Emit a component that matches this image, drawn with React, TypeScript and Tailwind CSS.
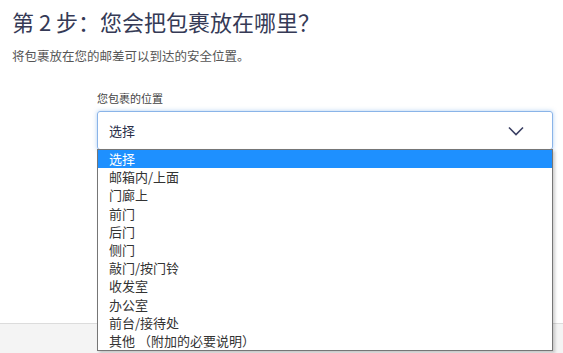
import React from 'react';

const options = [
  '选择',
  '邮箱内/上面',
  '门廊上',
  '前门',
  '后门',
  '侧门',
  '敲门/按门铃',
  '收发室',
  '办公室',
  '前台/接待处',
  '其他 （附加的必要说明）',
];

const App: React.FC = () => {
  return (
    <div
      className="w-[563px] h-[353px] overflow-hidden bg-white flex flex-col"
      style={{ fontFamily: '"Noto Sans CJK SC", "Noto Sans", sans-serif' }}
    >
      <div className="flex-1 px-3 pt-[5px]">
        <h2 className="text-[22px] leading-[32px] text-[#353a56]">第 2 步：您会把包裹放在哪里？</h2>
        <p className="mt-[10px] text-[12.5px] leading-[18px] text-[#555]">将包裹放在您的邮差可以到达的安全位置。</p>

        <div className="ml-[85px] mt-[25px] w-[456px] relative">
          <label className="block text-[11px] leading-[16px] text-[#444]">您包裹的位置</label>
          <div className="mt-[5px] h-[39px] border border-[#8ab4e8] rounded-[3px] shadow-[0_0_4px_rgba(100,160,230,0.5)] flex items-center justify-between pl-[11px] pr-[28px]">
            <span className="text-[13px] text-[#2b2f4a]">选择</span>
            <svg width="16" height="10" viewBox="0 0 16 10" fill="none">
              <path d="M1 1.5L8 8.5L15 1.5" stroke="#3a3f63" strokeWidth="1.6" />
            </svg>
          </div>

          <ul className="absolute left-0 top-[59px] w-[456px] bg-white border border-[#767676] shadow-[2px_2px_3px_rgba(0,0,0,0.2)] z-10 text-[13px] text-[#333]">
            {options.map((o, i) => (
              <li
                key={o}
                className={
                  i === 0
                    ? 'h-[18.2px] leading-[18px] pl-[11px] bg-[#1e90ff] text-white'
                    : 'h-[18.2px] leading-[18px] pl-[11px]'
                }
              >
                {o}
              </li>
            ))}
          </ul>
        </div>
      </div>
      <div className="h-[30px] border-t border-[#dcdcdc] bg-[#f4f4f4]" />
    </div>
  );
};

export default App;
